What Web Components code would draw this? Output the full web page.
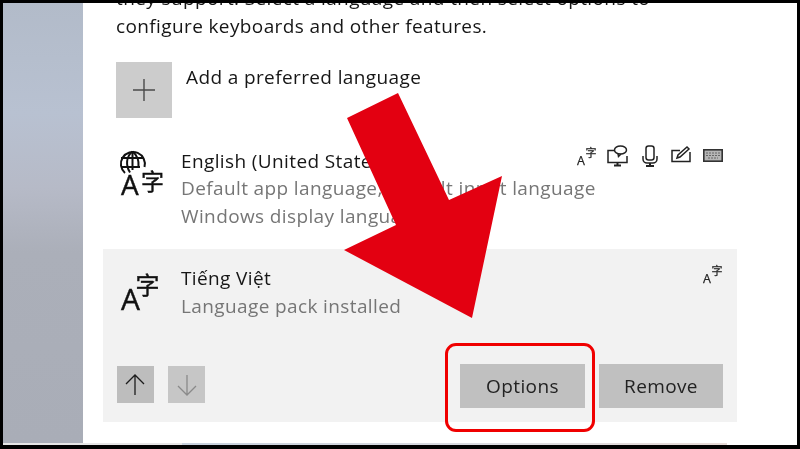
<!DOCTYPE html>
<html>
<head>
<meta charset="utf-8">
<title>Language settings</title>
<style>
    html, body { margin: 0; height: 100%; background: #000; overflow: hidden; }
    body { font-family: "Open Sans", "Noto Sans CJK SC", sans-serif; letter-spacing: .38px; }
</style>
</head>
<body>
<settings-frame>
    <intro-text>they support. Select a language and then select options to<br>configure keyboards and other features.</intro-text>
    <add-language>Add a preferred language</add-language>
    <language-row>
        <lang-icon slot="icon" globe></lang-icon>
        <span slot="title">English (United States)</span>
        <span slot="detail">Default app language, default input language</span>
        <span slot="detail">Windows display language</span>
        <feature-icons slot="trailing" all></feature-icons>
    </language-row>
    <language-panel>
        <language-row compact>
            <lang-icon slot="icon"></lang-icon>
            <span slot="title">Tiếng Việt</span>
            <span slot="detail">Language pack installed</span>
            <feature-icons slot="trailing"></feature-icons>
        </language-row>
        <square-button slot="left" dir="up"></square-button>
        <square-button slot="left" dir="down"></square-button>
        <action-button slot="right" wide>Options</action-button>
        <action-button slot="right">Remove</action-button>
    </language-panel>
</settings-frame>
<callout-arrow></callout-arrow>
<callout-ring></callout-ring>

<script>
class SettingsFrame extends HTMLElement {
    constructor() {
        super();
        this.attachShadow({ mode: 'open' });
    }
    connectedCallback() {
        this.shadowRoot.innerHTML = `
            <style>
                :host {
                    display: grid;
                    box-sizing: border-box;
                    width: 800px;
                    height: 449px;
                    border: solid #000;
                    border-width: 3px 3px 4px 3px;
                    grid-template-columns: 80px 1fr;
                    grid-template-rows: 1fr 2px;
                    background: #fff;
                }
                .side {
                    background: linear-gradient(180deg, #b2bbc9 0, #b8c1d1 110px, #b6bac7 185px, #abafb9 250px, #a9adb7 100%);
                }
                .main {
                    min-width: 0;
                    overflow: hidden;
                    padding: 0 60px 0 20px;
                    color: #161616;
                    filter: blur(0.35px);
                }
                .strip {
                    grid-column: 1 / 3;
                    display: grid;
                    grid-template-columns: 179px 545px 1fr;
                }
                .strip i:nth-child(1) { background: #e6e6e6; }
                .strip i:nth-child(2) { background: linear-gradient(90deg, #c6d0dc, #dcdce0 60%, #e6dad6); }
            </style>
            <div class="side"></div>
            <div class="main"><slot></slot></div>
            <div class="strip"><i></i><i></i><i></i></div>
        `;
    }
}
customElements.define('settings-frame', SettingsFrame);

class IntroText extends HTMLElement {
    constructor() {
        super();
        this.attachShadow({ mode: 'open' });
    }
    connectedCallback() {
        this.shadowRoot.innerHTML = `
            <style>
                :host {
                    display: block;
                    margin: -19px 0 0 13px;
                    font-size: 19px;
                    line-height: 28px;
                    white-space: nowrap;
                }
            </style>
            <slot></slot>
        `;
    }
}
customElements.define('intro-text', IntroText);

class AddLanguage extends HTMLElement {
    constructor() {
        super();
        this.attachShadow({ mode: 'open' });
    }
    connectedCallback() {
        this.shadowRoot.innerHTML = `
            <style>
                :host {
                    display: flex;
                    gap: 14px;
                    margin: 22px 0 0 13px;
                    font-size: 19px;
                    line-height: 28px;
                }
                .tile {
                    width: 56px;
                    height: 56px;
                    background: #cccccc;
                    display: flex;
                    align-items: center;
                    justify-content: center;
                }
                .label { margin-top: 1px; }
            </style>
            <div class="tile">
                <svg width="24" height="24" viewBox="0 0 24 24" fill="none" stroke="#4a4a4a" stroke-width="1.400">
                    <path d="M12 1v22M1 12h22"/>
                </svg>
            </div>
            <div class="label"><slot></slot></div>
        `;
    }
}
customElements.define('add-language', AddLanguage);

class LanguageRow extends HTMLElement {
    constructor() {
        super();
        this.attachShadow({ mode: 'open' });
    }
    connectedCallback() {
        this.shadowRoot.innerHTML = `
            <style>
                :host {
                    display: grid;
                    grid-template-columns: 65px minmax(0, 1fr) auto;
                    margin: 29px 0 0 13px;
                    padding-right: 14px;
                    font-size: 19px;
                    line-height: 28px;
                }
                :host([compact]) { margin-top: 0; }
                .text { display: flex; flex-direction: column; white-space: nowrap; }
                .detail { display: flex; flex-direction: column; color: #767676; margin: -1px 0 1px; }
                :host([compact]) .detail { margin: 0; }
            </style>
            <div class="icon"><slot name="icon"></slot></div>
            <div class="text">
                <slot name="title"></slot>
                <div class="detail"><slot name="detail"></slot></div>
            </div>
            <div class="trailing"><slot name="trailing"></slot></div>
        `;
    }
}
customElements.define('language-row', LanguageRow);

class LangIcon extends HTMLElement {
    constructor() {
        super();
        this.attachShadow({ mode: 'open' });
    }
    connectedCallback() {
        const globe = this.hasAttribute('globe');
        const art = globe ? `
            <g fill="none" stroke="#111" stroke-width="2">
                <path d="M8 24A12 12 0 1 1 27.500 18"/>
                <path d="M15.500 2.500c-6.500 5-7 14-2.500 21M15.500 2.500c5 4 6.500 10 6 15.500"/>
                <path d="M15.500 2.500V21M4 9h23M4 18h19"/>
            </g>
            <text x="4" y="46" font-size="28">A</text>
            <text x="24" y="41" font-size="23">字</text>
        ` : `
            <text x="1" y="42" font-size="30">A</text>
            <text x="15.500" y="26" font-size="24">字</text>
        `;
        this.shadowRoot.innerHTML = `
            <style>
                :host { display: block; width: 48px; height: 50px; margin: ${globe ? '2px 0 0 1px' : '4px 0 0 4px'}; }
                svg { display: block; font-family: "Open Sans", "Noto Sans CJK SC", sans-serif; letter-spacing: 0; }
                text { fill: #111; stroke: #111; stroke-width: .4px; }
            </style>
            <svg width="48" height="50" viewBox="0 0 48 50">${art}</svg>
        `;
    }
}
customElements.define('lang-icon', LangIcon);

class FeatureIcons extends HTMLElement {
    constructor() {
        super();
        this.attachShadow({ mode: 'open' });
    }
    connectedCallback() {
        const lang = `
            <svg width="20" height="22" viewBox="0 0 20 22">
                <text x="0" y="20" font-size="12.500">A</text>
                <text x="8.500" y="11.500" font-size="11">字</text>
            </svg>`;
        const rest = `
            <svg width="21" height="22" viewBox="0 0 21 22" fill="none" stroke="#222" stroke-width="1.500">
                <path d="M8 5.500H1v12h19V11"/>
                <ellipse cx="13.500" cy="5" rx="6" ry="4"/>
                <path d="M11 8.500l.5 3 2.500-2.500"/>
                <path d="M7 20.500h7M10.500 17.500v3" stroke-width="2"/>
            </svg>
            <svg width="16" height="22" viewBox="0 0 16 22" fill="none" stroke="#222" stroke-width="1.500">
                <rect x="4" y="1" width="8" height="14" rx="2.500"/>
                <path d="M1 11v3c0 2.500 2 4 4 4h6c2 0 4-1.500 4-4v-3"/>
                <path d="M8 18v2M4 21h8" stroke-width="2"/>
            </svg>
            <svg width="20" height="22" viewBox="0 0 20 22" fill="none" stroke="#222" stroke-width="1.500">
                <path d="M9 5.500H1v11h18V7"/>
                <path d="M6 13l1-3 9-8 2 2-9 8z" fill="#fff"/>
            </svg>
            <svg width="20" height="22" viewBox="0 0 20 22">
                <rect x=".8" y="4.800" width="18.400" height="11.400" fill="#b5b5b5" stroke="#333" stroke-width="1.600"/>
                <path d="M3 8h14M3 10.500h14M5 13h10" stroke="#666" stroke-width="1" stroke-dasharray="2 1"/>
            </svg>`;
        const all = this.hasAttribute('all');
        this.shadowRoot.innerHTML = `
            <style>
                :host { display: flex; margin-top: ${all ? '-2px' : '-1px'}; justify-content: flex-end; }
                .row { display: flex; }
                svg { display: block; font-family: "Open Sans", "Noto Sans CJK SC", sans-serif; letter-spacing: 0; }
                text { fill: #222; stroke: #222; stroke-width: .25px; }
                svg + svg { margin-left: 12px; }
                svg:nth-child(2) { margin-left: 10px; }
                svg:nth-child(3) { margin-left: 14px; }
                svg:nth-child(4) { margin-left: 13px; }
            </style>
            <div class="row">${lang}${all ? rest : ''}</div>
        `;
    }
}
customElements.define('feature-icons', FeatureIcons);

class LanguagePanel extends HTMLElement {
    constructor() {
        super();
        this.attachShadow({ mode: 'open' });
    }
    connectedCallback() {
        this.shadowRoot.innerHTML = `
            <style>
                :host {
                    display: block;
                    margin-top: 18px;
                    padding: 15px 0 14px 0;
                    background: #f2f2f2;
                }
                .actions {
                    display: flex;
                    justify-content: space-between;
                    align-items: flex-start;
                    margin-top: 44px;
                    padding: 0 14px 0 13.500px;
                }
                .left { display: flex; gap: 14.500px; margin-top: 2px; }
                .right { display: flex; gap: 14px; }
            </style>
            <slot></slot>
            <div class="actions">
                <div class="left"><slot name="left"></slot></div>
                <div class="right"><slot name="right"></slot></div>
            </div>
        `;
    }
}
customElements.define('language-panel', LanguagePanel);

class SquareButton extends HTMLElement {
    constructor() {
        super();
        this.attachShadow({ mode: 'open' });
    }
    connectedCallback() {
        const up = this.getAttribute('dir') === 'up';
        this.shadowRoot.innerHTML = `
            <style>
                :host {
                    display: flex;
                    width: 37px;
                    height: 37px;
                    align-items: center;
                    justify-content: center;
                    background: ${up ? '#bdbdbd' : '#c6c6c6'};
                }
                svg { display: block; }
            </style>
            <svg width="20" height="22" viewBox="0 0 20 22" fill="none" stroke="${up ? '#1c1c1c' : '#8a8a8a'}" stroke-width="1.300">
                ${up ? '<path d="M10 1v20M1 10l9-9 9 9"/>' : '<path d="M10 1v20M1 12l9 9 9-9"/>'}
            </svg>
        `;
    }
}
customElements.define('square-button', SquareButton);

class ActionButton extends HTMLElement {
    constructor() {
        super();
        this.attachShadow({ mode: 'open' });
    }
    connectedCallback() {
        this.shadowRoot.innerHTML = `
            <style>
                :host {
                    display: flex;
                    width: 124px;
                    height: 44px;
                    align-items: center;
                    justify-content: center;
                    background: #c0c0c0;
                    font-size: 19px;
                    color: #222;
                }
                :host([wide]) { width: 125px; }
            </style>
            <slot></slot>
        `;
    }
}
customElements.define('action-button', ActionButton);

class CalloutArrow extends HTMLElement {
    constructor() {
        super();
        this.attachShadow({ mode: 'open' });
    }
    connectedCallback() {
        this.shadowRoot.innerHTML = `
            <style>
                :host { position: absolute; left: 0; top: 0; }
                svg { display: block; }
            </style>
            <svg width="800" height="449" viewBox="0 0 800 449">
                <polygon fill="#e30011" points="398,93 347,118 396,225 344,250 472,318 502,176 449,200"/>
            </svg>
        `;
    }
}
customElements.define('callout-arrow', CalloutArrow);

class CalloutRing extends HTMLElement {
    constructor() {
        super();
        this.attachShadow({ mode: 'open' });
    }
    connectedCallback() {
        this.shadowRoot.innerHTML = `
            <style>
                :host {
                    position: absolute;
                    left: 445px;
                    top: 343px;
                    width: 150px;
                    height: 89px;
                    box-sizing: border-box;
                    border: 3px solid #f00000;
                    border-radius: 11px;
                }
            </style>
        `;
    }
}
customElements.define('callout-ring', CalloutRing);
</script>
</body>
</html>
